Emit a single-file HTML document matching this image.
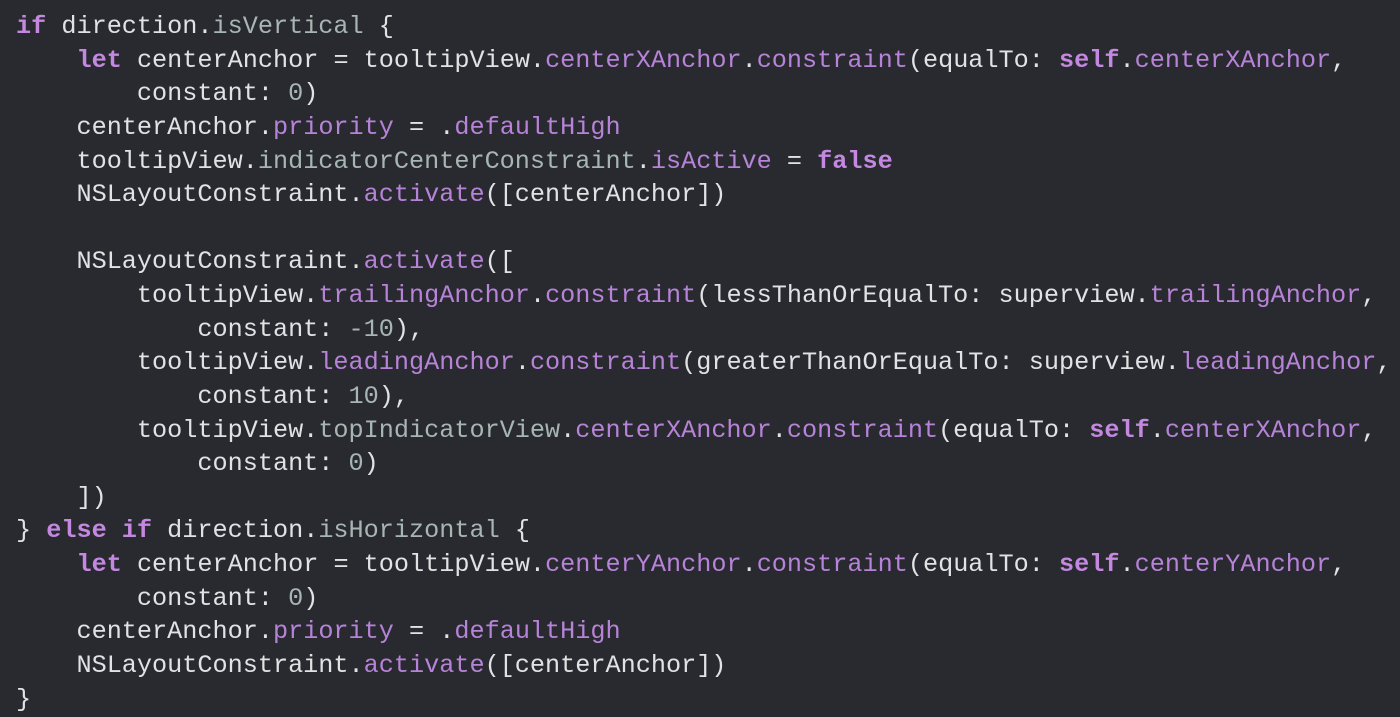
<!DOCTYPE html>
<html><head><style>
html,body{margin:0;padding:0;background:#292a30;width:1400px;height:717px;overflow:hidden}
pre{margin:0;position:absolute;left:16px;top:10px;font-family:"Liberation Mono",monospace;font-size:25.2px;line-height:33.63px;color:#e2e2e4}
.k{color:#c488e0;font-weight:bold}
.s{color:#b783d8}
.p{color:#a7b6b2}
</style></head><body><pre><span class="k">if</span> direction.<span class="p">isVertical</span> {
    <span class="k">let</span> centerAnchor = tooltipView.<span class="s">centerXAnchor</span>.<span class="s">constraint</span>(equalTo: <span class="k">self</span>.<span class="s">centerXAnchor</span>,
        constant: <span class="p">0</span>)
    centerAnchor.<span class="s">priority</span> = .<span class="s">defaultHigh</span>
    tooltipView.<span class="p">indicatorCenterConstraint</span>.<span class="s">isActive</span> = <span class="k">false</span>
    NSLayoutConstraint.<span class="s">activate</span>([centerAnchor])

    NSLayoutConstraint.<span class="s">activate</span>([
        tooltipView.<span class="s">trailingAnchor</span>.<span class="s">constraint</span>(lessThanOrEqualTo: superview.<span class="s">trailingAnchor</span>,
            constant: <span class="p">-10</span>),
        tooltipView.<span class="s">leadingAnchor</span>.<span class="s">constraint</span>(greaterThanOrEqualTo: superview.<span class="s">leadingAnchor</span>,
            constant: <span class="p">10</span>),
        tooltipView.<span class="p">topIndicatorView</span>.<span class="s">centerXAnchor</span>.<span class="s">constraint</span>(equalTo: <span class="k">self</span>.<span class="s">centerXAnchor</span>,
            constant: <span class="p">0</span>)
    ])
} <span class="k">else if</span> direction.<span class="p">isHorizontal</span> {
    <span class="k">let</span> centerAnchor = tooltipView.<span class="s">centerYAnchor</span>.<span class="s">constraint</span>(equalTo: <span class="k">self</span>.<span class="s">centerYAnchor</span>,
        constant: <span class="p">0</span>)
    centerAnchor.<span class="s">priority</span> = .<span class="s">defaultHigh</span>
    NSLayoutConstraint.<span class="s">activate</span>([centerAnchor])
}</pre></body></html>
